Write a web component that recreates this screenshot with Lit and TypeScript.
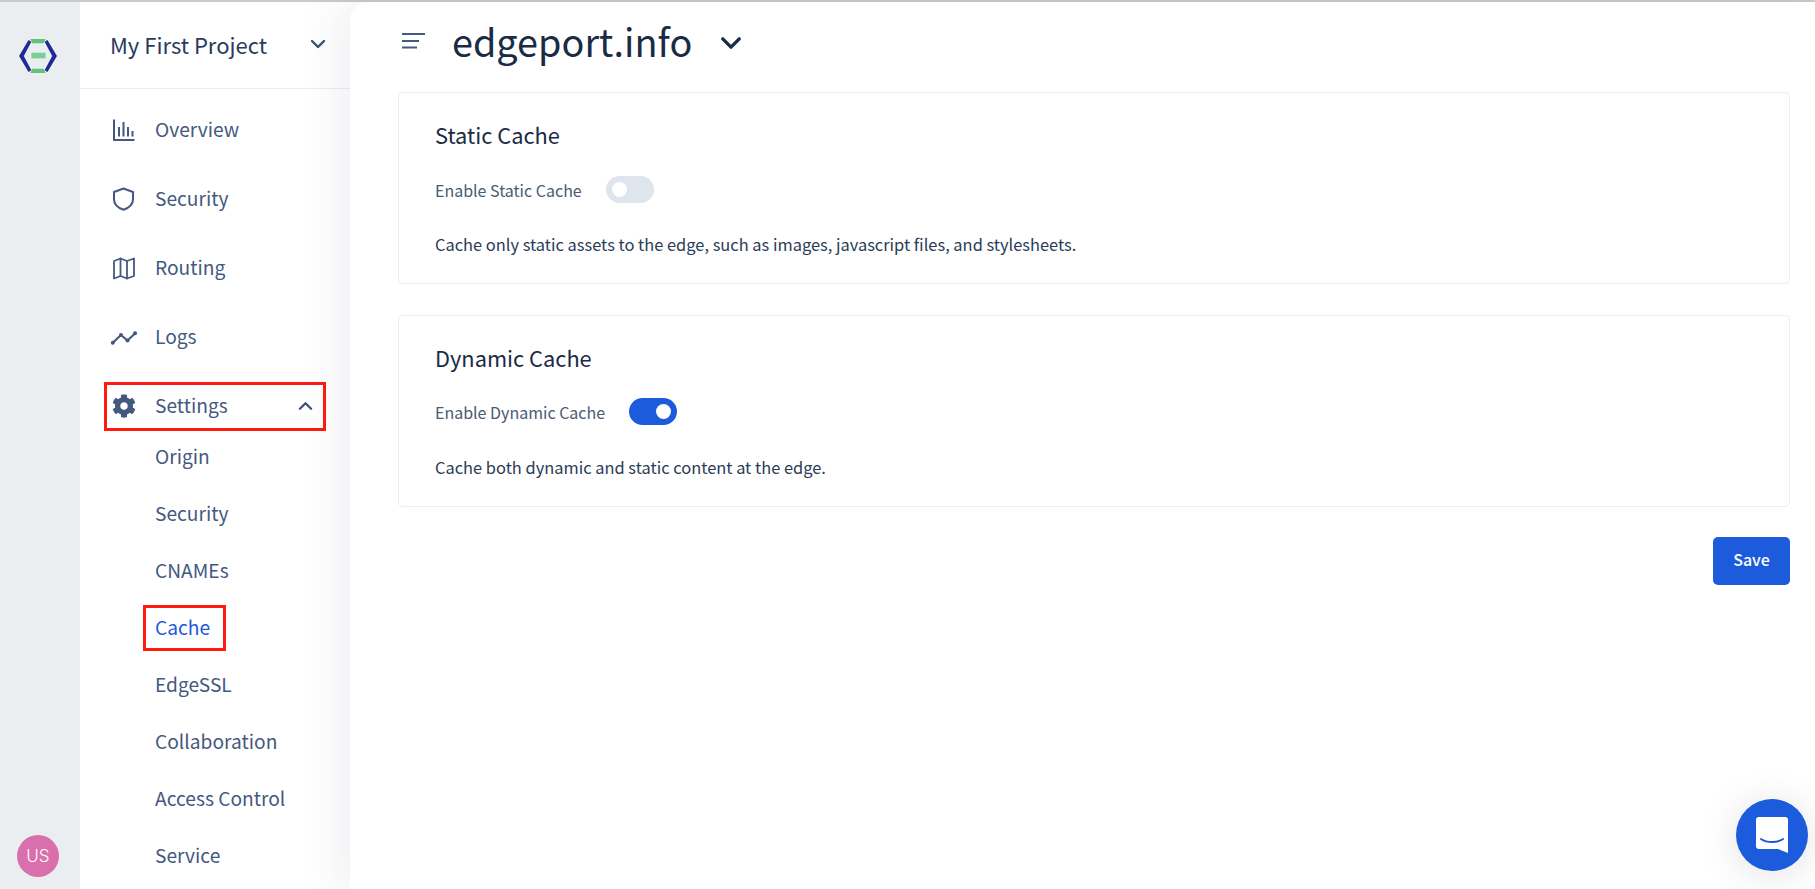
import { LitElement, html, css, svg } from "lit";
import { customElement } from "lit/decorators.js";

const ic = (body: unknown) => html`<svg class="ic" viewBox="0 0 24 24" width="24" height="24" fill="none" stroke="currentColor" stroke-width="2" stroke-linecap="round" stroke-linejoin="round">${body}</svg>`;

const ICONS: Record<string, unknown> = {
  overview: ic(svg`<path d="M2 1.500V22H22.500" stroke-linecap="butt" stroke-width="2"/><path d="M7 9V18.500M11.500 4V18.500M16 9V18.500M20.500 13V18.500" stroke-linecap="butt" stroke-width="2"/>`),
  shield: ic(svg`<path d="M11.500 1.500 21 5V12.500C21 17.400 17 20.800 11.500 22.800 6 20.800 2 17.400 2 12.500V5Z" stroke-width="2"/>`),
  map: ic(svg`<path d="M2 5 8.500 2.500 15 5 22 2.500V20L15 22.500 8.500 20 2 22.500Z" stroke-width="1.800"/><path d="M8.500 2.500V20M15 5V22.500" stroke-width="1.800"/>`),
  logs: ic(svg`<path d="M0.500 18 9 10 15.500 15.500 23.500 8" stroke-width="2.200"/><g fill="currentColor" stroke="none"><circle cx="0.800" cy="17.800" r="2"/><circle cx="9" cy="10" r="2"/><circle cx="15.500" cy="15.500" r="2"/><circle cx="23" cy="8.300" r="2"/></g>`),
  cog: html`<svg class="ic" viewBox="0 0 512 512" width="24" height="24" fill="currentColor"><path d="M487.400 315.700l-42.600-24.600c4.300-23.200 4.300-47 0-70.200l42.600-24.600c4.900-2.800 7.100-8.600 5.500-14-11.100-35.600-30-67.800-54.700-94.600-3.800-4.100-10-5.100-14.800-2.300L380.800 110c-17.900-15.400-38.500-27.300-60.800-35.100V25.800c0-5.600-3.900-10.500-9.400-11.700-36.700-8.200-74.300-7.800-109.200 0-5.500 1.200-9.400 6.100-9.400 11.700V75c-22.200 7.900-42.800 19.800-60.800 35.100L88.700 85.500c-4.900-2.800-11-1.900-14.800 2.300-24.700 26.700-43.600 58.900-54.700 94.600-1.700 5.400.6 11.200 5.500 14L67.300 221c-4.300 23.200-4.300 47 0 70.200l-42.600 24.600c-4.900 2.800-7.100 8.600-5.500 14 11.100 35.600 30 67.800 54.700 94.600 3.800 4.100 10 5.100 14.800 2.300l42.600-24.600c17.900 15.400 38.500 27.300 60.800 35.100v49.200c0 5.600 3.900 10.500 9.400 11.700 36.700 8.200 74.300 7.800 109.200 0 5.500-1.200 9.400-6.100 9.400-11.700v-49.200c22.200-7.900 42.800-19.800 60.800-35.100l42.600 24.600c4.900 2.800 11 1.900 14.800-2.300 24.700-26.700 43.600-58.900 54.700-94.600 1.500-5.500-.7-11.300-5.600-14.100zM256 336c-44.100 0-80-35.900-80-80s35.900-80 80-80 80 35.900 80 80-35.900 80-80 80z"/></svg>`,
};

const chev = (up: boolean, cls: string) => html`<svg class=${cls} viewBox="0 0 16 10" fill="none" stroke="currentColor" stroke-width="2.400" stroke-linecap="round" stroke-linejoin="round"><path d=${up ? "M2 8 8 2 14 8" : "M2 2 8 8 14 2"}/></svg>`;

@customElement("app-root")
export class AppRoot extends LitElement {
  static styles = css`
    :host { display: block; width: 1815px; height: 889px; overflow: hidden; background: #fff;
      font-family: "Noto Sans CJK SC", "Noto Sans", sans-serif; position: relative; }
    * { box-sizing: border-box; }
    .topline { height: 2px; background: #c9c9c9; }
    .shell { display: flex; height: 887px; }
    .rail { width: 80px; flex: none; background: #ebeef1; display: flex; flex-direction: column; align-items: center; justify-content: space-between; padding: 36px 4px 12px 0; }
    .logo { width: 40px; height: 36px; display: block; }
    .avatar { width: 42px; height: 42px; border-radius: 50%; background: #d96fac; color: #fff; font-family: "Inter", sans-serif; font-weight: 300; font-size: 17px; display: flex; align-items: center; justify-content: center; }
    .side { width: 270px; flex: none; background: #fff; }
    .project { height: 87px; border-bottom: 1px solid #eceef1; display: flex; align-items: center; justify-content: space-between; padding: 0 24px 2px 30px; font-size: 22px; color: #2a3b5c; }
    .chev-p { width: 16px; height: 10px; color: #3d4f73; }
    .nav { display: flex; flex-direction: column; padding-top: 7px; color: #44597f; font-size: 19.200px; }
    .row { height: 69px; display: flex; align-items: center; padding: 0 0 2px 32px; gap: 19px; flex: none; }
    .row span { margin-top: -2px; }
    .ic { flex: none; width: 24px; height: 24px; color: #44597f; overflow: visible; }
    .settings { height: 49px; margin: 10px 0 0 24px; width: 222px; border: 3px solid #ff1a10; padding: 0 10px 2px 5px; justify-content: flex-start; }
    .settings .lbl { flex: 1; }
    .chev-s { width: 15px; height: 10px; color: #3d4f73; }
    .subs { display: flex; flex-direction: column; margin-top: -4px; }
    .sub { height: 57px; display: flex; align-items: center; padding-left: 75px; flex: none; }
    .cache { color: #1c5bdc; margin-left: 63px; width: 83px; height: 46px; margin-top: 7px; margin-bottom: 4px; border: 3px solid #ff1a10; padding: 0 0 2px 9px; }
    .main { flex: 1; min-width: 0; background: #fff; border-top-left-radius: 18px; box-shadow: -14px 0 40px rgba(40, 55, 85, 0.07); padding: 0 25px 0 48px; position: relative; }
    .head { height: 84px; display: flex; align-items: center; padding-bottom: 6px; color: #1a2b45; }
    .menu { width: 24px; height: 18px; color: #44597f; flex: none; margin: 0 26px 0 4px; }
    h1 { margin: 0; font-weight: 400; font-size: 37.800px; line-height: 1; color: #1a2b45; }
    .chev-t { width: 22px; height: 14px; margin: 4px 0 0 28px; color: #1a2b45; }
    .cards { display: flex; flex-direction: column; gap: 31px; margin-top: 6px; }
    .card { height: 192px; border: 1px solid #eceef2; border-radius: 5px; padding: 27px 36px 0; background: #fff; }
    h2 { margin: 0; font-weight: 400; font-size: 21.800px; line-height: 30px; color: #1a2b45; }
    .line { display: flex; align-items: center; gap: 24px; margin-top: 26px; height: 27px; font-size: 16px; color: #4a5b72; }
    .second .line { margin-top: 25px; }
    .toggle { width: 48px; height: 27px; border-radius: 14px; background: #dfe5ec; display: flex; align-items: center; padding: 0 6px; flex: none; }
    .toggle.on { background: #1c5bdc; justify-content: flex-end; }
    .knob { width: 15px; height: 15px; border-radius: 50%; background: #fff; }
    p { margin: 28px 0 0; font-size: 16.430px; line-height: 26px; color: #2b3c55; }
    .second p { margin-top: 29px; }
    .actions { display: flex; justify-content: flex-end; margin-top: 30px; }
    button { width: 77px; height: 48px; background: #1c5bdc; color: #fff; border: 0; border-radius: 5px; padding: 0 0 5px; font: 500 16px "Noto Sans CJK SC", "Noto Sans", sans-serif; }
    .chat { position: absolute; left: 1736px; top: 799px; width: 72px; height: 72px; border-radius: 50%; background: #1c5bdc; box-shadow: 0 4px 40px rgba(0,0,0,.12); display: flex; align-items: center; justify-content: center; }
    .chat svg { width: 32px; height: 36px; display: block; }
  `;

  render() {
    const top = [["overview", "Overview"], ["shield", "Security"], ["map", "Routing"], ["logs", "Logs"]];
    const subs = ["Origin", "Security", "CNAMEs", "Cache", "EdgeSSL", "Collaboration", "Access Control", "Service"];
    return html`
      <div class="topline"></div>
      <div class="shell">
        <div class="rail">
          <svg class="logo" viewBox="0 0 42 38">
            <path d="M11 2 14 4 6 19 14 34 11 36 1 19Z" fill="#1f2a96"/>
            <path d="M31 2 28 4 36 19 28 34 31 36 41 19Z" fill="#1f2a96"/>
            <path d="M13 1H29L27 5.500H15Z" fill="#62c27c"/>
            <path d="M14 15.500H29V21.500H14Z" fill="#7ccf94"/>
            <path d="M15 32.500H27L29 37H13Z" fill="#62c27c"/>
          </svg>
          <div class="avatar">US</div>
        </div>
        <div class="side">
          <div class="project"><span>My First Project</span>${chev(false, "chev-p")}</div>
          <div class="nav">
            ${top.map(([i, l]) => html`<div class="row">${ICONS[i]}<span>${l}</span></div>`)}
            <div class="row settings">${ICONS.cog}<span class="lbl">Settings</span>${chev(true, "chev-s")}</div>
            <div class="subs">
              ${subs.map((s) => html`<div class="sub ${s === "Cache" ? "cache" : ""}">${s}</div>`)}
            </div>
          </div>
        </div>
        <div class="main">
          <div class="head">
            <svg class="menu" viewBox="0 0 24 18" fill="currentColor"><rect y="1" width="23" height="2"/><rect y="8" width="17" height="2"/><rect y="14.500" width="15" height="2"/></svg>
            <h1>edgeport.info</h1>
            ${chev(false, "chev-t")}
          </div>
          <div class="cards">
            <div class="card">
              <h2>Static Cache</h2>
              <div class="line"><span>Enable Static Cache</span><div class="toggle"><div class="knob"></div></div></div>
              <p>Cache only static assets to the edge, such as images, javascript files, and stylesheets.</p>
            </div>
            <div class="card second">
              <h2>Dynamic Cache</h2>
              <div class="line"><span>Enable Dynamic Cache</span><div class="toggle on"><div class="knob"></div></div></div>
              <p>Cache both dynamic and static content at the edge.</p>
            </div>
          </div>
          <div class="actions"><button>Save</button></div>
        </div>
      </div>
      <div class="chat">
        <svg viewBox="0 0 32 36"><path d="M3 0H29A3 3 0 0 1 32 3V36L22 32H3A3 3 0 0 1 0 29V3A3 3 0 0 1 3 0Z" fill="#fff"/><path d="M5 22C11 26 21 26 27 22" fill="none" stroke="#1c5bdc" stroke-width="2" stroke-linecap="round"/></svg>
      </div>
    `;
  }
}
